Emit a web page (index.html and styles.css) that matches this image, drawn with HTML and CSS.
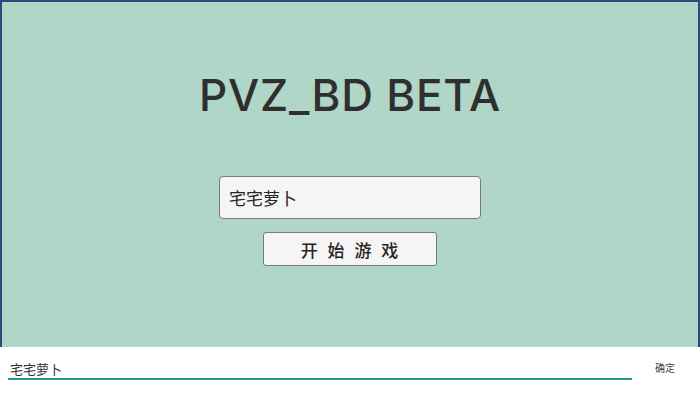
FILE: index.html
```html
<!DOCTYPE html>
<html>
<head>
<meta charset="utf-8">
<link rel="stylesheet" href="styles.css">
</head>
<body>
<div class="screen">
  <div class="stage">
    <h1 class="title">PVZ_BD BETA</h1>
    <div class="name-field">宅宅萝卜</div>
    <button class="start">开 始 游 戏</button>
  </div>
  <div class="ime-bar">
    <div class="ime-input">宅宅萝卜</div>
    <div class="ime-ok">确定</div>
  </div>
</div>
</body>
</html>
```
FILE: styles.css
```css
html, body {
  margin: 0;
  padding: 0;
  width: 700px;
  height: 393px;
  overflow: hidden;
  background: #ffffff;
  font-family: "Noto Sans", "Noto Sans CJK SC", sans-serif;
}
.screen {
  width: 700px;
  height: 393px;
  display: flex;
  flex-direction: column;
}
.stage {
  height: 347px;
  box-sizing: border-box;
  background: #b0d6c8;
  border-top: 2px solid #2f4a78;
  border-left: 2px solid #2f4a78;
  border-right: 2px solid #2f4a78;
  display: flex;
  flex-direction: column;
  align-items: center;
}
.title {
  margin: 67px 0 0 0;
  font-family: "Inter", "Noto Sans", sans-serif;
  font-weight: 500;
  font-size: 44px;
  line-height: 52px;
  color: #2f2f2f;
  letter-spacing: 0.8px;
}
.name-field {
  margin-top: 55px;
  width: 262px;
  height: 43px;
  box-sizing: border-box;
  background: #f5f5f5;
  border: 1px solid #7a7a7a;
  border-radius: 4px;
  padding-left: 9px;
  display: flex;
  align-items: center;
  font-family: "Noto Sans CJK SC", sans-serif;
  font-size: 17px;
  color: #262626;
}
.start {
  margin-top: 13px;
  width: 174px;
  height: 34px;
  box-sizing: border-box;
  background: #f5f5f5;
  border: 1px solid #7a7a7a;
  border-radius: 3px;
  font-family: "Noto Sans CJK SC", sans-serif;
  font-size: 17px;
  font-weight: 500;
  color: #262626;
  letter-spacing: 1px;
  padding: 0;
  word-spacing: 4px;
}
.ime-bar {
  flex: 1;
  display: flex;
  align-items: flex-start;
  padding: 13px 0 0 8px;
  background: #ffffff;
}
.ime-input {
  width: 624px;
  box-sizing: border-box;
  padding: 0 0 1px 2px;
  border-bottom: 2px solid #1e9a8a;
  font-family: "Noto Sans CJK SC", sans-serif;
  font-size: 13px;
  line-height: 17px;
  color: #333;
}
.ime-ok {
  margin-left: 23px;
  margin-top: 1px;
  font-family: "Noto Sans CJK SC", sans-serif;
  font-size: 10px;
  line-height: 14px;
  color: #444;
}
```
